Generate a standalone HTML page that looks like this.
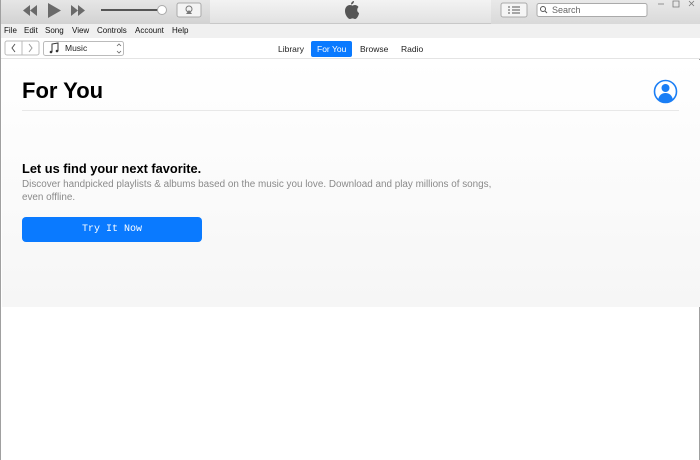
<!DOCTYPE html>
<html><head><style>
*{margin:0;padding:0;box-sizing:border-box}
body{width:700px;height:460px;overflow:hidden;background:#fff;font-family:"Liberation Sans",sans-serif;position:relative;border-left:1px solid #a0a0a0;border-right:1px solid #a0a0a0}
.abs{position:absolute}
#title{left:0;top:0;width:700px;height:24px;background:linear-gradient(#f3f3f3,#e2e2e2);border-bottom:1px solid #c8c8c8}
#tl{left:0;top:0;width:209px;height:24px;background:linear-gradient(#e6e6e6,#d2d2d2)}
#tr{left:490px;top:0;width:210px;height:24px;background:linear-gradient(#e9e9e9,#d9d9d9)}
#menu{left:0;top:24px;width:700px;height:14px;background:#f0f0f0;font-size:8px;color:#111}
#menu span{position:absolute;top:2px}
#nav{left:0;top:38px;width:700px;height:21px;background:#fff;border-bottom:1px solid #e4e4e4}
.tab{position:absolute;top:41px;height:16px;font-size:8.5px;line-height:16px;color:#222;padding:0 6px;border-radius:2px}
#content{left:1px;top:60px;width:698px;height:247px;background:linear-gradient(#fff,#f6f6f6)}
</style></head><body>
<div id="title" class="abs"></div>
<div id="tl" class="abs"></div>
<div id="tr" class="abs"></div>
<svg class="abs" style="left:0;top:0" width="700" height="24">
<path d="M22 10.5 L29 5 V16 Z M29 10.5 L36 5 V16Z" fill="#6a6a6a"/>
<path d="M47 3 L60 10.5 L47 18 Z" fill="#6a6a6a"/>
<path d="M70 5 L77 10.5 L70 16 Z M77 5 L84 10.5 L77 16Z" fill="#6a6a6a"/>
<rect x="100" y="9" width="60" height="2" fill="#555"/>
<circle cx="161" cy="10" r="4.5" fill="#fff" stroke="#aaa"/>
<rect x="176" y="3" width="24" height="14" rx="2" fill="#f4f4f4" stroke="#aaa"/>
<circle cx="188" cy="9" r="3" fill="none" stroke="#777"/><path d="M185 14 L188 10 L191 14Z" fill="#777"/>
<path d="M349 5 c-3 0 -5 2.5 -5 6 c0 4 3 8 5 8 c1 0 1.5-.6 2.5-.6 s1.5.6 2.5.6 c2 0 4-4 4-6 c-2-1-2.5-4-.5-6 c-1-1.5-2.5-2-3.5-2 c-1.5 0-2 .6-2.5.6 s-1-.6-2.5-.6z M350 4.5 c0-2 1.5-3.5 3-3.5 c0 2-1.5 3.5-3 3.5z" fill="#555"/>
<rect x="500" y="3" width="26" height="14" rx="2" fill="#f5f5f5" stroke="#aaa"/>
<path d="M507 7h2M511 7h8M507 10h2M511 10h8M507 13h2M511 13h8" stroke="#555" stroke-width="1"/>
<rect x="536" y="3.5" width="110" height="13" rx="2" fill="#fff" stroke="#aaa"/>
<circle cx="542" cy="9" r="2.5" fill="none" stroke="#555"/><path d="M544 11l2 2" stroke="#555"/>
<path d="M657 4h6M672 1h6v6h-6z M688 1l5 5M693 1l-5 5" stroke="#777" fill="none" stroke-width=".8"/>
</svg>
<div class="abs" style="left:551px;top:5px;font-size:9px;color:#666">Search</div>
<div id="menu" class="abs"><span style="left:3px">File</span><span style="left:23px">Edit</span><span style="left:44px">Song</span><span style="left:71px">View</span><span style="left:96px">Controls</span><span style="left:134px">Account</span><span style="left:171px">Help</span></div>
<div id="nav" class="abs"></div>
<svg class="abs" style="left:0;top:38px" width="130" height="21">
<rect x="4" y="3" width="34" height="14" rx="2" fill="#fff" stroke="#bbb"/><path d="M21 3v14" stroke="#bbb"/>
<path d="M14 6l-3 4 3 4" stroke="#555" fill="none"/><path d="M28 6l3 4-3 4" stroke="#999" fill="none"/>
<rect x="42.5" y="3.5" width="80" height="14" rx="2" fill="#fff" stroke="#bbb"/>
<path d="M51 14V6l6-1v8" stroke="#333" fill="none"/><circle cx="50" cy="14" r="1.3" fill="#333"/><circle cx="56" cy="13" r="1.3" fill="#333"/>
<path d="M116 8l2-2 2 2M116 13l2 2 2-2" stroke="#666" fill="none" stroke-width=".8"/>
</svg>
<div class="abs" style="left:64px;top:43px;font-size:8.5px;color:#222">Music</div>
<div class="tab" style="left:271px">Library</div>
<div class="tab" style="left:310px;background:#0a7aff;color:#fff">For You</div>
<div class="tab" style="left:353px">Browse</div>
<div class="tab" style="left:394px">Radio</div>
<div id="content" class="abs"></div>
<div class="abs" style="left:21px;top:78px;font-size:22px;font-weight:bold;color:#000">For You</div>
<div class="abs" style="left:21px;top:110px;width:657px;height:1px;background:#e8e8e8"></div>
<svg class="abs" style="left:652px;top:79px" width="25" height="25"><circle cx="12.5" cy="12.5" r="11" fill="#fff" stroke="#1a7ef5" stroke-width="1.6"/><circle cx="12.5" cy="9" r="4" fill="#1a7ef5"/><path d="M5 21c1-5 4-7 7.5-7s6.5 2 7.5 7a11 11 0 0 1-15 0z" fill="#1a7ef5"/></svg>
<div class="abs" style="left:21px;top:161px;font-size:12.8px;font-weight:bold;color:#000">Let us find your next favorite.</div>
<div class="abs" style="left:21px;top:179px;width:490px;font-size:9.9px;line-height:12.5px;color:#8a8a8a">Discover handpicked playlists &amp; albums based on the music you love. Download and play millions of songs, even offline.</div>
<div class="abs" style="left:21px;top:217px;width:180px;height:25px;background:#0a7aff;border-radius:4px;color:#fff;font-family:'Liberation Mono',monospace;font-size:10px;text-align:center;line-height:25px">Try It Now</div>
</body></html>
